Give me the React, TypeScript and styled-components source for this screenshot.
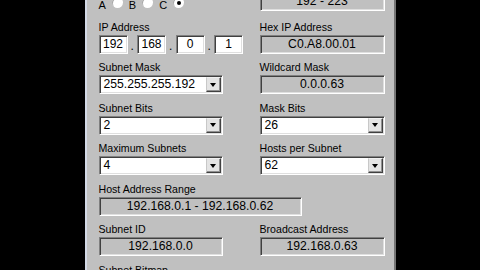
import React from "react";
import styled, { createGlobalStyle, css } from "styled-components";

const GlobalStyle = createGlobalStyle`
  html, body {
    margin: 0;
    padding: 0;
    background: #000;
  }
  body {
    font-family: "Liberation Sans", Arial, sans-serif;
    color: #000;
  }
`;

const sunken = css`
  box-sizing: border-box;
  border: 1px solid;
  border-color: #808080 #ffffff #ffffff #808080;
  box-shadow: inset 1px 1px #404040, inset -1px -1px #dfdfdf;
`;

const Screen = styled.div`
  width: 480px;
  height: 270px;
  overflow: hidden;
  display: flex;
  justify-content: center;
  background: #000;
`;

// the dialog is scrolled, so its top lies above the window
const Dialog = styled.div`
  width: 311px;
  height: 300px;
  margin-top: -8px;
  box-sizing: border-box;
  background: #c0c0c0;
  border-left: 2px solid #d3d9e6;
  border-right: 2px solid #767676;
  padding: 0 9px 0 12px;
  display: grid;
  grid-template-columns: 161px 125px;
  grid-auto-rows: min-content;
  row-gap: 7.5px;
  align-content: start;
`;

const Field = styled.div<{ $wide?: boolean; $first?: boolean }>`
  display: flex;
  flex-direction: column;
  grid-column: ${(p) => (p.$wide ? "span 2" : "auto")};
  margin-bottom: ${(p) => (p.$first ? "2px" : "0")};
`;

const Label = styled.div`
  height: 13px;
  line-height: 13px;
  font-size: 10.6px;
  margin-bottom: 1px;
  white-space: nowrap;
`;

const RadioRow = styled.div`
  height: 19px;
  display: flex;
  align-items: flex-end;
  font-size: 11px;
`;

const RadioLetter = styled.span`
  line-height: 11px;
  margin-right: 6px;
`;

const Radio = styled.span<{ $checked?: boolean }>`
  width: 11px;
  height: 11px;
  margin: 0 6px 3px 0;
  border-radius: 50%;
  background: #fff;
  box-shadow: inset 1px 1px #a8a8a8;
  display: flex;
  align-items: center;
  justify-content: center;
  &::after {
    content: "";
    width: 4px;
    height: 4px;
    border-radius: 50%;
    background: ${(p) => (p.$checked ? "#000" : "transparent")};
  }
`;

const ReadBox = styled.div<{ $w: number }>`
  ${sunken}
  width: ${(p) => p.$w}px;
  height: 19px;
  background: #c0c0c0;
  display: flex;
  align-items: center;
  justify-content: center;
  font-size: 12.2px;
  padding-bottom: 1px;
  white-space: nowrap;
`;

const IpRow = styled.div`
  display: flex;
  align-items: flex-end;
  width: 145px;
`;

const IpBox = styled.div`
  ${sunken}
  width: 29px;
  height: 19px;
  background: #fff;
  display: flex;
  align-items: center;
  justify-content: center;
  font-size: 12px;
  padding-bottom: 1px;
`;

const IpDot = styled.span`
  width: 9.5px;
  text-align: center;
  font-size: 12px;
  line-height: 15px;
`;

const Combo = styled.div<{ $w: number }>`
  ${sunken}
  width: ${(p) => p.$w}px;
  height: 19px;
  background: #fff;
  display: flex;
  align-items: center;
`;

const ComboText = styled.span`
  flex: 1;
  padding-left: 4px;
  font-size: 12.2px;
  padding-bottom: 1px;
`;

const DropButton = styled.span`
  width: 15px;
  height: 15px;
  margin-right: 1px;
  box-sizing: border-box;
  background: #e4e4e4;
  border: 1px solid;
  border-color: #f0f0f0 #404040 #404040 #c8c8c8;
  box-shadow: inset -1px -1px #909090;
  display: flex;
  align-items: center;
  justify-content: center;
  &::after {
    content: "";
    border-left: 3.5px solid transparent;
    border-right: 3.5px solid transparent;
    border-top: 4px solid #000;
  }
`;

const ComboBox: React.FC<{ value: string; width?: number }> = ({ value, width = 124 }) => (
  <Combo $w={width}>
    <ComboText>{value}</ComboText>
    <DropButton />
  </Combo>
);

const App: React.FC = () => {
  const octets = ["192", "168", "0", "1"];
  return (
    <>
      <GlobalStyle />
      <Screen>
        <Dialog>
          <Field $first>
            <RadioRow>
              <RadioLetter>A</RadioLetter>
              <Radio />
              <RadioLetter>B</RadioLetter>
              <Radio />
              <RadioLetter>C</RadioLetter>
              <Radio $checked />
            </RadioRow>
          </Field>
          <Field $first>
            <ReadBox $w={125}>192 - 223</ReadBox>
          </Field>

          <Field>
            <Label>IP Address</Label>
            <IpRow>
              {octets.map((o, i) => (
                <React.Fragment key={i}>
                  {i > 0 && <IpDot>.</IpDot>}
                  <IpBox>{o}</IpBox>
                </React.Fragment>
              ))}
            </IpRow>
          </Field>
          <Field>
            <Label>Hex IP Address</Label>
            <ReadBox $w={125}>C0.A8.00.01</ReadBox>
          </Field>

          <Field>
            <Label>Subnet Mask</Label>
            <ComboBox value="255.255.255.192" />
          </Field>
          <Field>
            <Label>Wildcard Mask</Label>
            <ReadBox $w={125}>0.0.0.63</ReadBox>
          </Field>

          <Field>
            <Label>Subnet Bits</Label>
            <ComboBox value="2" />
          </Field>
          <Field>
            <Label>Mask Bits</Label>
            <ComboBox value="26" width={125} />
          </Field>

          <Field>
            <Label>Maximum Subnets</Label>
            <ComboBox value="4" />
          </Field>
          <Field>
            <Label>Hosts per Subnet</Label>
            <ComboBox value="62" width={125} />
          </Field>

          <Field $wide>
            <Label>Host Address Range</Label>
            <ReadBox $w={203}>192.168.0.1 - 192.168.0.62</ReadBox>
          </Field>

          <Field>
            <Label>Subnet ID</Label>
            <ReadBox $w={124}>192.168.0.0</ReadBox>
          </Field>
          <Field>
            <Label>Broadcast Address</Label>
            <ReadBox $w={125}>192.168.0.63</ReadBox>
          </Field>

          <Field $wide>
            <Label>Subnet Bitmap</Label>
          </Field>
        </Dialog>
      </Screen>
    </>
  );
};

export default App;
